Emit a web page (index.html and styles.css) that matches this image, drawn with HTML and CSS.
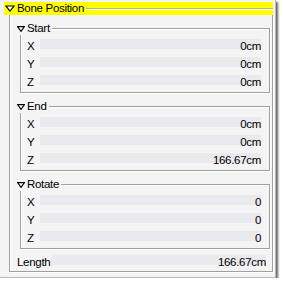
FILE: index.html
```html
<!DOCTYPE html>
<html>
<head>
<meta charset="utf-8">
<link rel="stylesheet" href="styles.css">
</head>
<body>
<div class="panel">
  <div class="outer-head">
    <svg class="tri" width="10" height="7" viewBox="0 0 10 7"><path d="M1 1 H9 L5 6 Z" fill="#fff" stroke="#000" stroke-width="1.2" stroke-linejoin="miter"/></svg>
    <span class="outer-title">Bone Position</span>
    <i class="rule"></i>
  </div>
  <div class="outer-body">
    <div class="grp">
      <div class="grp-head"><span class="lbl"><svg class="tri" width="8" height="6" viewBox="0 0 8 6"><path d="M0.6 0.6 H7.4 L4 5.4 Z" fill="#fff" stroke="#000" stroke-width="1.1"/></svg>Start</span></div>
      <div class="grp-body">
        <div class="row"><span class="key">X</span><span class="field">0cm</span></div>
        <div class="row"><span class="key">Y</span><span class="field">0cm</span></div>
        <div class="row"><span class="key">Z</span><span class="field">0cm</span></div>
      </div>
    </div>
    <div class="grp">
      <div class="grp-head"><span class="lbl"><svg class="tri" width="8" height="6" viewBox="0 0 8 6"><path d="M0.6 0.6 H7.4 L4 5.4 Z" fill="#fff" stroke="#000" stroke-width="1.1"/></svg>End</span></div>
      <div class="grp-body">
        <div class="row"><span class="key">X</span><span class="field">0cm</span></div>
        <div class="row"><span class="key">Y</span><span class="field">0cm</span></div>
        <div class="row"><span class="key">Z</span><span class="field">166.67cm</span></div>
      </div>
    </div>
    <div class="grp">
      <div class="grp-head"><span class="lbl"><svg class="tri" width="8" height="6" viewBox="0 0 8 6"><path d="M0.6 0.6 H7.4 L4 5.4 Z" fill="#fff" stroke="#000" stroke-width="1.1"/></svg>Rotate</span></div>
      <div class="grp-body">
        <div class="row"><span class="key">X</span><span class="field">0</span></div>
        <div class="row"><span class="key">Y</span><span class="field">0</span></div>
        <div class="row"><span class="key">Z</span><span class="field">0</span></div>
      </div>
    </div>
    <div class="row length"><span class="key">Length</span><span class="field">166.67cm</span></div>
  </div>
</div>
</body>
</html>
```
FILE: styles.css
```css
html, body {
  margin: 0;
  padding: 0;
  background: #ffffff;
}
body {
  font-family: "Liberation Sans", Arial, sans-serif;
  font-size: 11.5px;
  letter-spacing: -0.3px;
  color: #000;
}
.panel {
  width: 276px;
  height: 278px;
  box-sizing: border-box;
  background: #f4f4f5;
  border-right: 1px solid #b8b8b8;
  border-bottom: 1px solid #b8b8b8;
  box-shadow: 2px 2px 2px rgba(0, 0, 0, 0.6);
  padding: 2px 2px 0 4px;
}
.outer-head {
  display: flex;
  align-items: center;
  height: 13px;
  background: #ffff00;
  padding-left: 1px;
}
.outer-head .tri {
  margin-right: 2px;
  flex: none;
}
.outer-title {
  line-height: 13px;
  padding-right: 2px;
}
.rule {
  flex: 1;
  height: 0;
  border-top: 1px solid #b5b59a;
  border-bottom: 1px solid #ffffe0;
  align-self: center;
}
.outer-body {
  margin-left: 5px;
  border: 1px solid #a0a0a0;
  border-top: none;
  box-shadow: inset 1px 0 0 #fff, 1px 1px 0 #fff;
  padding: 7px 2px 0 6px;
  display: flex;
  flex-direction: column;
  gap: 7px;
}
.grp {
  display: flex;
  flex-direction: column;
}
.grp-head {
  display: flex;
  height: 13px;
  align-items: center;
  margin-bottom: -7px;
  position: relative;
  z-index: 1;
}
.lbl {
  display: flex;
  align-items: center;
  background: #f4f4f5;
  padding: 0 2px 0 1px;
  line-height: 13px;
}
.lbl .tri {
  margin-right: 2px;
}
.grp-body {
  margin-left: 4px;
  border: 1px solid #a0a0a0;
  box-shadow: inset 1px 1px 0 #fff, 1px 1px 0 #fff;
  padding: 8px 8px 1px 6px;
}
.row {
  display: flex;
  align-items: center;
  height: 18px;
}
.key {
  width: 13px;
  flex: none;
}
.field {
  flex: 1;
  text-align: right;
  background: linear-gradient(#eaeaee, #eaeaee 70%, #f4f4f5 70%);
  height: 14px;
  line-height: 14px;
}
.row.length {
  padding: 0 4px 0 1px;
  margin-top: -3px;
  height: 18px;
}
.row.length .key {
  width: 34px;
}
```
